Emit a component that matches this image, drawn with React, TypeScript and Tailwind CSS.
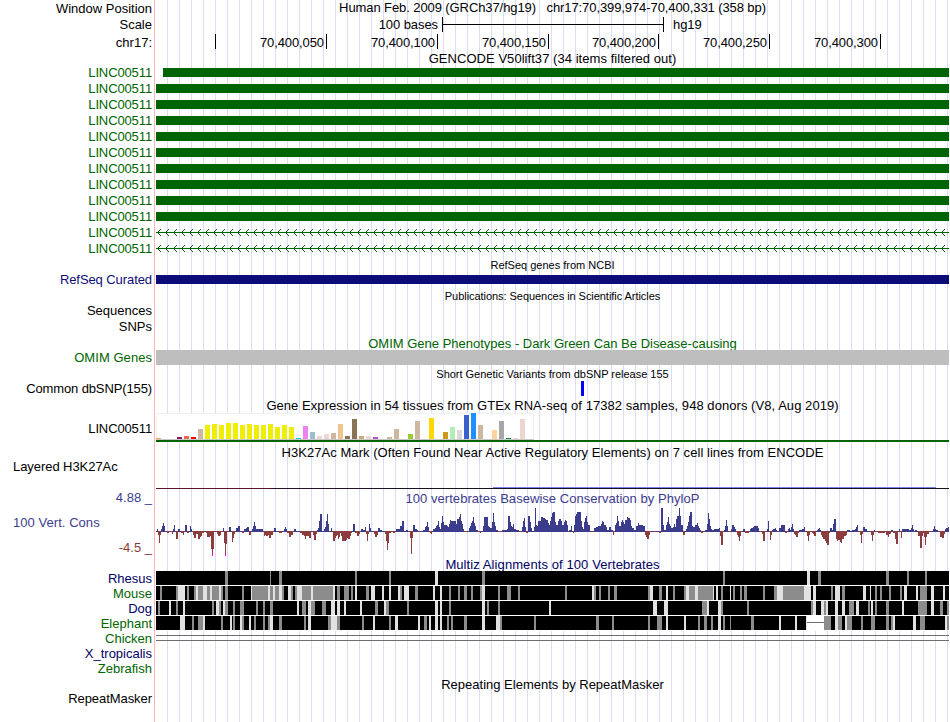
import React from 'react';
import clsx from 'clsx';

interface Label {
  text: string;
  className: string;
}

interface Segment {
  offset: number;
  data: string;
}

const TRACK_WIDTH = 793;

const labels: Label[] = [
  { text: 'Window Position', className: 'h-[17px]' },
  { text: 'Scale', className: 'h-[17px] pb-[2px]' },
  { text: 'chr17:', className: 'h-[30px] pb-[13px]' },
  ...Array.from({ length: 12 }, () => ({
    text: 'LINC00511',
    className: 'h-4 pt-[2px] tracking-[-0.12px] text-[#006400]',
  })),
  { text: 'RefSeq Curated', className: 'mt-4 h-4 tracking-[-0.08px] text-[#0c0c78]' },
  { text: 'Sequences', className: 'mt-[15px] h-4' },
  { text: 'SNPs', className: 'h-4' },
  { text: 'OMIM Genes', className: 'mt-[15px] h-[15px] tracking-[0.05px] text-[#006400]' },
  { text: 'Common dbSNP(155)', className: 'mt-4 h-[15px] tracking-[-0.12px]' },
  { text: 'LINC00511', className: 'mt-[17px] h-[29px] pt-[3px] tracking-[-0.12px]' },
  { text: 'Layered H3K27Ac', className: 'mt-[17px] h-4 justify-start! pl-[13px] tracking-[-0.06px]' },
  { text: '4.88 _', className: 'mt-[15px] h-4 text-[#3c3c8c]' },
  { text: '100 Vert. Cons', className: 'mt-[9px] h-4 justify-start! pl-[13px] tracking-[0.05px] text-[#3c3c8c]' },
  { text: '-4.5 _', className: 'mt-[9px] h-4 text-[#8c3c3c]' },
  { text: 'Rhesus', className: 'mt-[15px] h-[15px] text-[#000064]' },
  { text: 'Mouse', className: 'h-[15px] text-[#006400]' },
  { text: 'Dog', className: 'h-[15px] text-[#000064]' },
  { text: 'Elephant', className: 'h-[15px] text-[#006400]' },
  { text: 'Chicken', className: 'h-[15px] text-[#006400]' },
  { text: 'X_tropicalis', className: 'h-[15px] text-[#000064]' },
  { text: 'Zebrafish', className: 'h-[15px] text-[#006400]' },
  { text: 'RepeatMasker', className: 'mt-[15px] h-[15px] tracking-[-0.06px]' },
];

// [height, colour] for each tissue, left to right
const tissues: [number, string][] = [
  [1, '#ffa54f'], [0, ''], [0, ''], [2, '#8b1c62'], [3, '#ee6a50'], [2, '#ff0000'], [10, '#cdb79e'],
  [14, '#eeee00'], [15, '#eeee00'], [14, '#eeee00'], [16, '#eeee00'], [16, '#eeee00'], [14, '#eeee00'],
  [15, '#eeee00'], [14, '#eeee00'], [14, '#eeee00'], [15, '#eeee00'], [12, '#eeee00'], [14, '#eeee00'],
  [12, '#eeee00'], [1, '#00cdcd'], [13, '#ee82ee'], [7, '#9ac0cd'], [3, '#eed5d2'], [5, '#eed5d2'],
  [6, '#cdb79e'], [15, '#eec591'], [3, '#8b7355'], [20, '#8b7355'], [3, '#cdaa7d'], [3, '#eed5d2'],
  [2, '#b452cd'], [0, ''], [2, '#cdb79e'], [10, '#cdb79e'], [0, ''], [5, '#9acd32'], [18, '#cdb79e'],
  [0, ''], [21, '#ffd700'], [0, ''], [7, '#cd9b1d'], [12, '#b4eeb4'], [9, '#d9d9d9'], [24, '#3a5fcd'],
  [26, '#1e90ff'], [14, '#cdb79e'], [0, ''], [9, '#ffd39b'], [18, '#a6a6a6'], [1, '#008b45'],
  [1, '#eed5d2'], [20, '#eed5d2'], [0, ''],
];

// "x:score" steps, x in thirds of a pixel; a step lasts until the next one
const phyloP: Segment[] = [
  {
    offset: -18,
    data: '18:0 21:2 24:-4 27:-12 30:-4 33:2 36:5 39:8 42:5 45:0 51:-2 57:-1 66:-3 69:2 72:6 75:0 78:-8 84:2 90:-1 93:-2 99:-4 102:-1 105:6 111:-2 117:0 120:5 123:2 126:-1 129:-4 132:-7 138:-3 144:-8 150:-6 153:-5 156:-2 162:0 168:-2 171:-6 180:-5 183:-18 186:-25 189:-18 192:-1 201:-3 204:-5 210:-4 213:-1 219:3 222:-12 225:-25 228:-13 231:-1 237:4 243:0 246:-11 249:-7 252:-3 255:-1 258:3 264:5 270:0 276:-2 282:2 288:3 291:4 297:-4 303:0 306:2 309:5 312:9 315:5 318:2 339:-1 342:-5 345:-4 348:-5 354:-4 357:-7 363:-4 369:-1 372:3 378:0 387:-2 396:0 402:2 405:4 408:2 411:-2 417:-6 423:-4 429:-1 432:2 438:0 450:-2 456:-4 462:-5 465:-8 468:-5 477:-7 483:0 489:-4 492:-9 498:-3 501:1 504:3 507:10 510:17 516:0 522:2 525:4 528:10 531:17 534:7 537:0 543:3 546:-1 549:-10 555:-7 558:-5 561:-4 564:-8 567:-6 570:-2 573:-5 576:-10 588:-9 591:-7 594:-8 600:-5 603:-2 606:0 609:7 615:-2 621:-5 627:-3 630:-1 633:2 639:1 645:4 648:-3 651:-10 654:-3 657:7 660:3 663:0 669:-1 672:-3 675:-6 681:-4 684:3 690:1 696:0 705:-3 708:-10 711:-19 714:-12 717:-2 723:-1 729:-2 735:0 738:2 750:5 756:10 762:0 768:1 774:-1 780:-7 783:-23 786:-7 789:6 795:4',
  },
  {
    offset: 777,
    data: '0:2 6:1 9:-1 15:0 24:1 30:4 33:5 36:9 39:4 42:-1 45:-2 48:-3 51:0 54:2 60:3 63:5 66:6 69:10 72:4 75:2 78:8 81:15 84:9 87:6 96:5 99:4 102:7 105:11 108:10 123:7 126:12 132:14 135:17 138:10 141:7 144:2 147:-1 156:0 162:3 165:5 168:8 171:10 174:14 177:8 180:5 183:1 189:-1 195:-2 198:0 204:5 207:14 219:5 222:4 225:3 231:9 234:18 237:9 240:5 243:1 249:-1 261:1 276:2 279:15 285:9 288:5 291:4 294:7 297:2 303:1 312:-1 318:0 321:4 324:10 327:13 330:4 333:-2 339:15 345:9 348:3 351:0 357:4 360:23 363:6 366:5 369:10 378:14 384:13 390:12 393:11 399:8 402:6 405:10 408:14 411:18 414:19 420:9 423:6 429:10 432:12 438:10 441:6 447:9 450:11 453:10 456:6 459:-1 462:1 468:5 471:0 474:-2 477:6 480:15 483:17 486:19 498:10 501:4 504:2 507:9 510:13 513:15 516:9 519:6 525:-1 537:3 543:4 549:5 558:7 561:10 564:9 567:6 573:4 576:1 582:4 588:1 594:-4 597:-1 600:6 603:8 606:15 609:10 612:5 618:9 621:11 624:9 627:7 630:11 636:14 639:13 645:11 648:5 651:3 657:1 663:5 669:8 672:6 684:5 690:-4 693:-6 696:-8 702:-4 705:-1 708:0 717:-1 723:0 732:-2 738:23 744:6 747:1 753:6 756:9 759:14 762:7 765:5 768:3 774:4 777:7 780:4 783:12 786:15 792:23',
  },
  {
    offset: 1572,
    data: '0:15 3:6 9:-4 15:0 18:2 21:5 24:9 27:15 30:19 36:5 39:4 45:6 51:8 54:5 57:3 60:1 63:-2 69:-1 75:1 81:7 84:18 87:12 90:5 93:2 96:1 102:2 117:3 120:-5 123:-14 129:-1 132:1 135:5 138:11 141:5 144:-1 153:2 156:6 162:4 165:2 168:-1 171:-4 174:-6 177:-10 180:-5 183:-1 189:2 195:-2 207:0 210:2 213:3 219:4 222:5 234:3 237:-1 246:-3 249:-10 255:-1 261:2 264:10 267:-1 270:-9 273:-4 276:1 279:2 285:3 288:1 291:-1 297:3 303:6 315:-2 321:0 324:2 327:3 330:1 333:4 336:7 339:2 342:-3 345:-4 348:-6 354:-2 357:1 366:2 372:4 375:-1 381:-5 384:-10 387:-4 390:-1 396:-2 399:-3 402:-5 408:0 411:1 414:2 417:3 420:1 423:-4 426:-6 429:-8 435:-10 438:-12 441:-14 447:-2 450:3 456:1 459:7 462:12 468:-8 471:-10 474:-9 480:-11 483:-12 486:-8 492:-5 498:-4 501:1 510:0 516:1 525:2 528:4 531:6 534:-1 540:-4 543:-12 546:-3 549:4 555:2 561:0 570:-1 573:-4 576:-10 579:-4 582:1 585:-1 594:-2 615:-1 618:-4 624:-6 627:-3 633:1 639:-2 645:-8 648:-13 654:-1 657:2 660:-1 663:-7 666:2 687:1 693:3 696:6 699:2 702:-1 705:1 711:0 714:-5 720:-17 726:-5 729:-2 732:-6 735:-14 738:-6 741:-3 747:-1 753:0 759:2 762:5 765:2 768:1 774:-1 780:-6 786:-7 792:-3 795:2 798:3 804:4 807:0',
  },
];

// "from-to+shade" stripes on the black rows: g = weak match, l = mismatch, w = gap
const alignments: Segment[][] = [
  [
    { offset: -18, data: '225-234g 360-363g 387-396g 615-621g 717-723g' },
    { offset: 777, data: '60-69l 201-210g' },
    { offset: 1572, data: '129-135g 381-390l 414-423g 618-627g 681-687g 735-741g' },
  ],
  [
    { offset: -18, data: '30-36g 78-84g 84-105l 111-117g 132-138g 138-144l 144-159g 159-171l 171-180g 180-186l 186-207g 207-213l 213-219g 225-234g 276-282g 303-306l 306-354g 354-360l 360-369g 369-375l 375-387g 387-396l 396-402g 414-423l 423-429g 435-441g 441-456l 456-483g 483-489l 489-549g 549-555l 561-570g 582-597g 603-609g 615-621l 648-657g 663-675l 696-702l 717-723l 744-750l 750-756g 762-777l 795-804g' },
    { offset: 777, data: '54-60l 75-81l 102-108g 129-135g 147-156g 168-174g 195-201g 201-210l 249-255g 276-288g 309-315g 450-456g 531-537l 537-543g 552-558g 579-585g 597-606g 699-705g 705-714l 732-741g 753-759l 774-780g' },
    { offset: 1572, data: '12-18g 18-27l 27-45g 45-54l 54-99g 99-102l 108-114l 123-129g 150-153l 159-165g 180-186g 192-201g 249-255g 282-291g 291-309l 309-372g 372-393l 399-408l 453-459g 465-480l 486-495g 549-558l 570-573l 585-591g 600-606g 627-633g 660-666g 672-681l 708-714l 720-741g 753-762l 789-795l' },
  ],
  [
    { offset: -18, data: '24-30g 57-63l 78-84g 99-105l 186-192g 198-207l 207-213g 219-225l 225-234g 249-255g 270-282g 318-324g 339-345g 360-369g 441-447l 456-468g 474-483l 483-495g 516-528g 543-555l 561-570l 582-588l 630-636l 675-684g 702-708l 708-717g 771-777g' },
    { offset: 777, data: '60-69l 75-81l 102-108g 201-210l 216-222g 249-255g 402-408l 714-726l 747-759l' },
    { offset: 1572, data: '66-81g 81-87l 114-123l 123-129g 201-207g 393-399g 399-408l 423-432l 432-438g 438-444l 465-474l 486-495l 507-522g 528-537l 564-570g 573-579l 585-591g 618-627g 666-672l 714-741g 753-762l 780-789g 801-807g' },
  ],
  [
    { offset: -18, data: '90-105l 126-132g 144-159g 159-165l 213-219g 240-246l 249-255g 270-276l 276-282g 297-303l 312-318g 339-345g 354-360g 360-369l 387-396g 462-468g 474-483l 534-543g 543-561l 561-570g 636-642g 669-675l 717-723g 735-744l' },
    { offset: 777, data: '9-15l 27-36g 42-48l 60-69l 75-81l 96-102g 108-114g 147-156g 201-210l 243-255l 255-261g 357-363g 543-552g 591-597g 699-705g 726-741g 753-759l' },
    { offset: 1572, data: '12-18l 54-60g 72-81g 93-99g 114-123l 129-135g 150-153g 213-222g 297-303l 345-351l 378-381l 381-432w 432-453g 465-474l 474-486g 495-501l 501-516g 543-549g 573-585g 618-627g 633-639g 639-645l 699-708l 720-735g 795-801l 801-807g' },
  ],
];

const shades: Record<string, string> = { g: '#8c8c8c', l: '#e1e1e1', w: '#ffffff' };

const Title: React.FC<{ className?: string; children: React.ReactNode }> = ({ className, children }) => (
  <div className={clsx('flex items-center justify-center whitespace-pre', className)}>{children}</div>
);

const Ruler = () => (
  <div className="flex h-[17px] pt-px">
    <div className="ml-[59px] h-[15px] w-px bg-black" />
    {['70,400,050', '70,400,100', '70,400,150', '70,400,200', '70,400,250', '70,400,300'].map((pos) => (
      <div
        key={pos}
        className={clsx(
          'flex h-[15px] items-center justify-end border-r border-black pt-[2px] pr-[2px] tracking-[-0.1px]',
          pos === '70,400,200' ? 'w-[110px]' : 'w-[111px]',
        )}
      >
        {pos}
      </div>
    ))}
  </div>
);

const IntronArrows = () => (
  <svg width={TRACK_WIDTH} height="16" className="block" shapeRendering="crispEdges">
    <rect x="0" y="8" width={TRACK_WIDTH} height="1" fill="#006400" />
    {Array.from({ length: 99 }, (_, i) => (
      <path
        key={i}
        d={`M${i * 8 + 1} 8h1v1h-1z m1 -1h1v3h-1z m1 -1h1v1h-1z m0 4h1v1h-1z m1 -5h1v1h-1z m0 6h1v1h-1z`}
        fill="#006400"
      />
    ))}
  </svg>
);

const GtexPlot = () => (
  <div className="flex h-[29px] flex-col border-b-2 border-[#006400]">
    <div className="flex h-[27px] w-[378px] items-end gap-[2px] border-b border-[#c8c8c8] bg-white shadow-[inset_1px_1px_#f0f0f0,inset_-1px_0_#f0f0f0]">
      {tissues.map(([height, color], i) => (
        <div key={i} className="w-[5px] shrink-0" style={{ height, backgroundColor: color }} />
      ))}
    </div>
  </div>
);

const Conservation = () => {
  const steps = phyloP.flatMap(({ offset, data }) =>
    data.split(' ').map((step) => {
      const [x, score] = step.split(':').map(Number);
      return { x: Math.round((x + offset) / 3), score };
    }),
  );
  return (
    <svg width={TRACK_WIDTH} height="49" className="block" shapeRendering="crispEdges">
      {steps.slice(0, -1).map(({ x, score }, i) => {
        const width = steps[i + 1].x - x;
        return (
          <React.Fragment key={i}>
            <rect
              x={x}
              y={score > 0 ? 24 - score : 24}
              width={width}
              height={Math.abs(score) + (score >= 0 ? 1 : 0)}
              fill={score >= 0 ? '#3c3c8c' : '#8c3c3c'}
            />
            {score === -25 && <rect x={x} y="47" width={width} height="2" fill="#ff00ff" />}
          </React.Fragment>
        );
      })}
    </svg>
  );
};

const Alignment: React.FC<{ segments: Segment[] }> = ({ segments }) => (
  <svg width={TRACK_WIDTH} height="15" className="block" shapeRendering="crispEdges">
    <rect width={TRACK_WIDTH} height="14" fill="#000000" />
    <rect y="14" width={TRACK_WIDTH} height="1" fill="#ffffff" />
    {segments.flatMap(({ offset, data }) =>
      data.split(' ').map((stripe) => {
        const shade = stripe.slice(-1);
        const [from, to] = stripe.slice(0, -1).split('-').map((n) => (Number(n) + offset) / 3);
        return (
          <React.Fragment key={`${from}-${to}`}>
            <rect x={from} width={to - from} height="14" fill={shades[shade]} />
            {shade === 'w' && <rect x={from} y="6" width={to - from} height="1" fill="#6e6e6e" />}
          </React.Fragment>
        );
      }),
    )}
  </svg>
);

const App: React.FC = () => (
  <div className="flex h-[722px] w-[950px] overflow-hidden bg-white font-['Liberation_Sans',Arial,sans-serif] text-[13px] leading-4 text-black">
    <div className="flex w-[154px] shrink-0 flex-col pr-[2px]">
      {labels.map(({ text, className }, i) => (
        <div key={i} className={clsx('flex shrink-0 items-center justify-end whitespace-pre', className)}>
          {text}
        </div>
      ))}
    </div>

    <div className="w-[795px] shrink-0 border-l border-[#ffb4b4] pl-px">
      <div className="flex h-[722px] w-[793px] flex-col bg-[linear-gradient(to_right,#dcdcf8_1px,transparent_1px)] bg-[length:12px_12px] bg-[position:11px_0]">
        <Title className="h-[16px] tracking-[-0.09px]">
          {'Human Feb. 2009 (GRCh37/hg19)   chr17:70,399,974-70,400,331 (358 bp)'}
        </Title>
        <div className="flex h-[17px] pt-px">
          <div className="flex h-[15px] w-[286px] items-center justify-end pr-1 tracking-[-0.08px]">100 bases</div>
          <div className="flex h-[15px] w-[222px] items-center border-x border-black">
            <div className="h-px w-full bg-black" />
          </div>
          <div className="flex h-[15px] items-center pl-[9px] tracking-[-0.1px]">hg19</div>
        </div>
        <Ruler />
        <Title className="h-[14px] pt-[4px] tracking-[0.05px]">GENCODE V50lift37 (34 items filtered out)</Title>

        {Array.from({ length: 10 }, (_, i) => (
          <div key={i} className={clsx('h-4 shrink-0 pt-1', i === 0 && 'pl-[7px]')}>
            <div className="h-[9px] bg-[#006400]" />
          </div>
        ))}
        <IntronArrows />
        <IntronArrows />

        <Title className="h-4 pt-px text-[11px]">RefSeq genes from NCBI</Title>
        <div className="h-4 pt-[3px]">
          <div className="h-[9px] bg-[#0c0c78]" />
        </div>

        <Title className="h-4 pb-px text-[11px] tracking-[-0.05px]">Publications: Sequences in Scientific Articles</Title>
        <div className="h-[31px]" />

        <Title className="h-[15px] pt-[3px] text-[#006400]">OMIM Gene Phenotypes - Dark Green Can Be Disease-causing</Title>
        <div className="h-[15px] bg-[#bebebe]" />

        <Title className="h-4 pt-px text-[11px] tracking-[-0.02px]">Short Genetic Variants from dbSNP release 155</Title>
        <div className="h-[15px] pl-[425px]">
          <div className="h-[15px] w-[3px] bg-[#0000ff]" />
        </div>

        <Title className="h-[17px] pt-[3px] tracking-[0.055px]">
          Gene Expression in 54 tissues from GTEx RNA-seq of 17382 samples, 948 donors (V8, Aug 2019)
        </Title>
        <GtexPlot />

        <Title className="h-[18px] pt-[4px] tracking-[0.05px]">
          H3K27Ac Mark (Often Found Near Active Regulatory Elements) on 7 cell lines from ENCODE
        </Title>
        <div className="flex h-[29px] flex-col justify-end">
          <div className="ml-[337px] h-px w-[443px] bg-[#8080f0]" />
          <div className="h-px bg-[linear-gradient(to_right,#5a1428_0px,#5a1428_114px,#28142a_115px,#14141e_300px)]" />
        </div>

        <Title className="h-[18px] pt-px tracking-[0.04px] text-[#3c3c8c]">
          100 vertebrates Basewise Conservation by PhyloP
        </Title>
        <Conservation />

        <Title className="h-[15px] pt-[2px] tracking-[0.09px] text-[#000064]">Multiz Alignments of 100 Vertebrates</Title>
        {alignments.map((segments, i) => (
          <Alignment key={i} segments={segments} />
        ))}
        <div className="h-[15px] pt-[4px]">
          <div className="h-[6px] border-y border-[#6e6e6e]" />
        </div>
        <div className="h-[30px]" />

        <Title className="h-4 pt-[2px]">Repeating Elements by RepeatMasker</Title>
      </div>
    </div>
  </div>
);

export default App;
